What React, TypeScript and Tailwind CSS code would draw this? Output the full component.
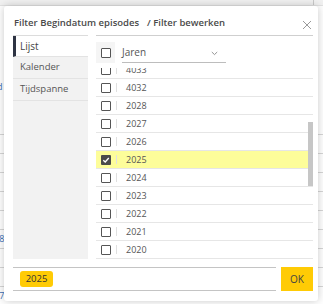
import { useState } from "react";

const years = ["4033", "4032", "2028", "2027", "2026", "2025", "2024", "2023", "2022", "2021", "2020"];
const tabs = ["Lijst", "Kalender", "Tijdspanne"];

// rows of the page behind the dialog
const bgRows = ["", "", "", "", "", "", "48", "7", "9", "57", "9", ""];

const Checkbox = ({ checked }: { checked?: boolean }) => (
  <div
    className={
      checked
        ? "w-[10px] h-[10px] rounded-[1px] bg-[#4a4a4a] flex items-center justify-center"
        : "w-[10px] h-[10px] rounded-[1px] border border-[#555] bg-white"
    }
  >
    {checked && (
      <svg width="8" height="8" viewBox="0 0 8 8">
        <path d="M1.3 4.2 L3.2 6 L6.8 2" fill="none" stroke="white" strokeWidth="1.3" />
      </svg>
    )}
  </div>
);

const App = () => {
  const [selected] = useState("2025");

  return (
    <div className="relative w-[323px] h-[304px] overflow-hidden bg-white font-['Open_Sans',sans-serif]">
      {/* page behind */}
      <div className="h-[6px] bg-[#f1f1f1] border-b border-[#e2e2e2] flex justify-end pr-[9px]">
        <div className="w-px h-full bg-[#c9c9c9]" />
      </div>
      <div className="pt-[76px] text-[9px] text-[#3b6fb5] leading-none -ml-[3px]">d</div>
      <div className="mt-[25px]">
        {bgRows.map((t, i) => (
          <div key={i} className="h-[19px] border-b border-[#d6d6d6] flex items-center -ml-[6px] text-[9px] text-[#3b6fb5]">
            {t}
          </div>
        ))}
      </div>

      {/* dialog */}
      <div className="absolute left-[4px] top-[6px] w-[314px] h-[295px] bg-white rounded-[3px] shadow-[0_0_8px_rgba(0,0,0,0.22)] pl-[9px] pr-[5px] flex flex-col">
        <div className="h-[29px] pt-[5px] flex items-center justify-between">
          <div className="text-[9.5px] font-semibold text-[#4a4a4a] pl-[1px] whitespace-nowrap">
            Filter Begindatum episodes<span className="ml-[8px]">/ Filter bewerken</span>
          </div>
          <svg width="10" height="10" viewBox="0 0 10 10" className="mr-[1px] mt-[3px]">
            <path d="M1 1 L9 9 M9 1 L1 9" stroke="#9a9a9a" strokeWidth="1" />
          </svg>
        </div>

        <div className="flex gap-[8px] h-[225px]">
          {/* tabs */}
          <div className="w-[75px] h-[224px] bg-[#f2f2f2] border-t border-[#dcdcdc]">
            {tabs.map((t, i) => (
              <div
                key={t}
                className={
                  i === 0
                    ? "h-[21px] bg-white border-l-[3px] border-[#2e3443] border-b border-b-[#e3e3e3] flex items-center pl-[4px] text-[10px] text-[#444]"
                    : "h-[22px] border-b border-[#e3e3e3] flex items-center pl-[7px] text-[9.5px] text-[#555]"
                }
              >
                {t}
              </div>
            ))}
          </div>

          {/* list */}
          <div className="flex-1 border-t border-[#cfcfcf] flex flex-col">
            <div className="flex mt-[6px] h-[21px]">
              <div className="w-[19px] h-[21px] bg-[#f5f5f5] flex items-center justify-center">
                <Checkbox />
              </div>
              <div className="ml-[7px] w-[104px] h-[21px] border-b border-[#bdbdbd] flex items-center justify-between text-[10px] text-[#555]">
                <span>Jaren</span>
                <svg width="7" height="5" viewBox="0 0 7 5" className="mr-[8px] mt-[2px]">
                  <path d="M0.8 1 L3.5 3.6 L6.2 1" fill="none" stroke="#888" strokeWidth="0.9" />
                </svg>
              </div>
            </div>
            <div className="relative mt-[5px] h-[192px] overflow-hidden">
              <div className="-mt-[7px]">
                {years.map((y) => (
                  <div
                    key={y}
                    className={
                      "h-[18px] border-b border-[#e6e6e6] flex items-center text-[9px] text-[#555] " +
                      (y === selected ? "bg-[#fdfd9a]" : "")
                    }
                  >
                    <div className="ml-[5px]">
                      <Checkbox checked={y === selected} />
                    </div>
                    <div className="ml-[5px] w-px h-[9px] bg-[#e0e0e0]" />
                    <span className="ml-[9px]">{y}</span>
                  </div>
                ))}
              </div>
              <div className="absolute right-0 top-[54px] w-[5px] h-[64px] bg-[#c6c6c6]" />
            </div>
          </div>
        </div>

        <div className="flex gap-[5px] mt-[7px]">
          <div className="flex-1 h-[24px] border-y border-[#c4c4c4] flex items-center pl-[7px]">
            <span className="h-[16px] w-[33px] rounded-[3px] bg-[#ffcb05] flex items-center justify-center text-[9.5px] text-[#333]">
              {selected}
            </span>
          </div>
          <button className="w-[32px] h-[24px] bg-[#ffcb05] text-[10px] text-[#444]">OK</button>
        </div>
      </div>
    </div>
  );
};

export default App;
